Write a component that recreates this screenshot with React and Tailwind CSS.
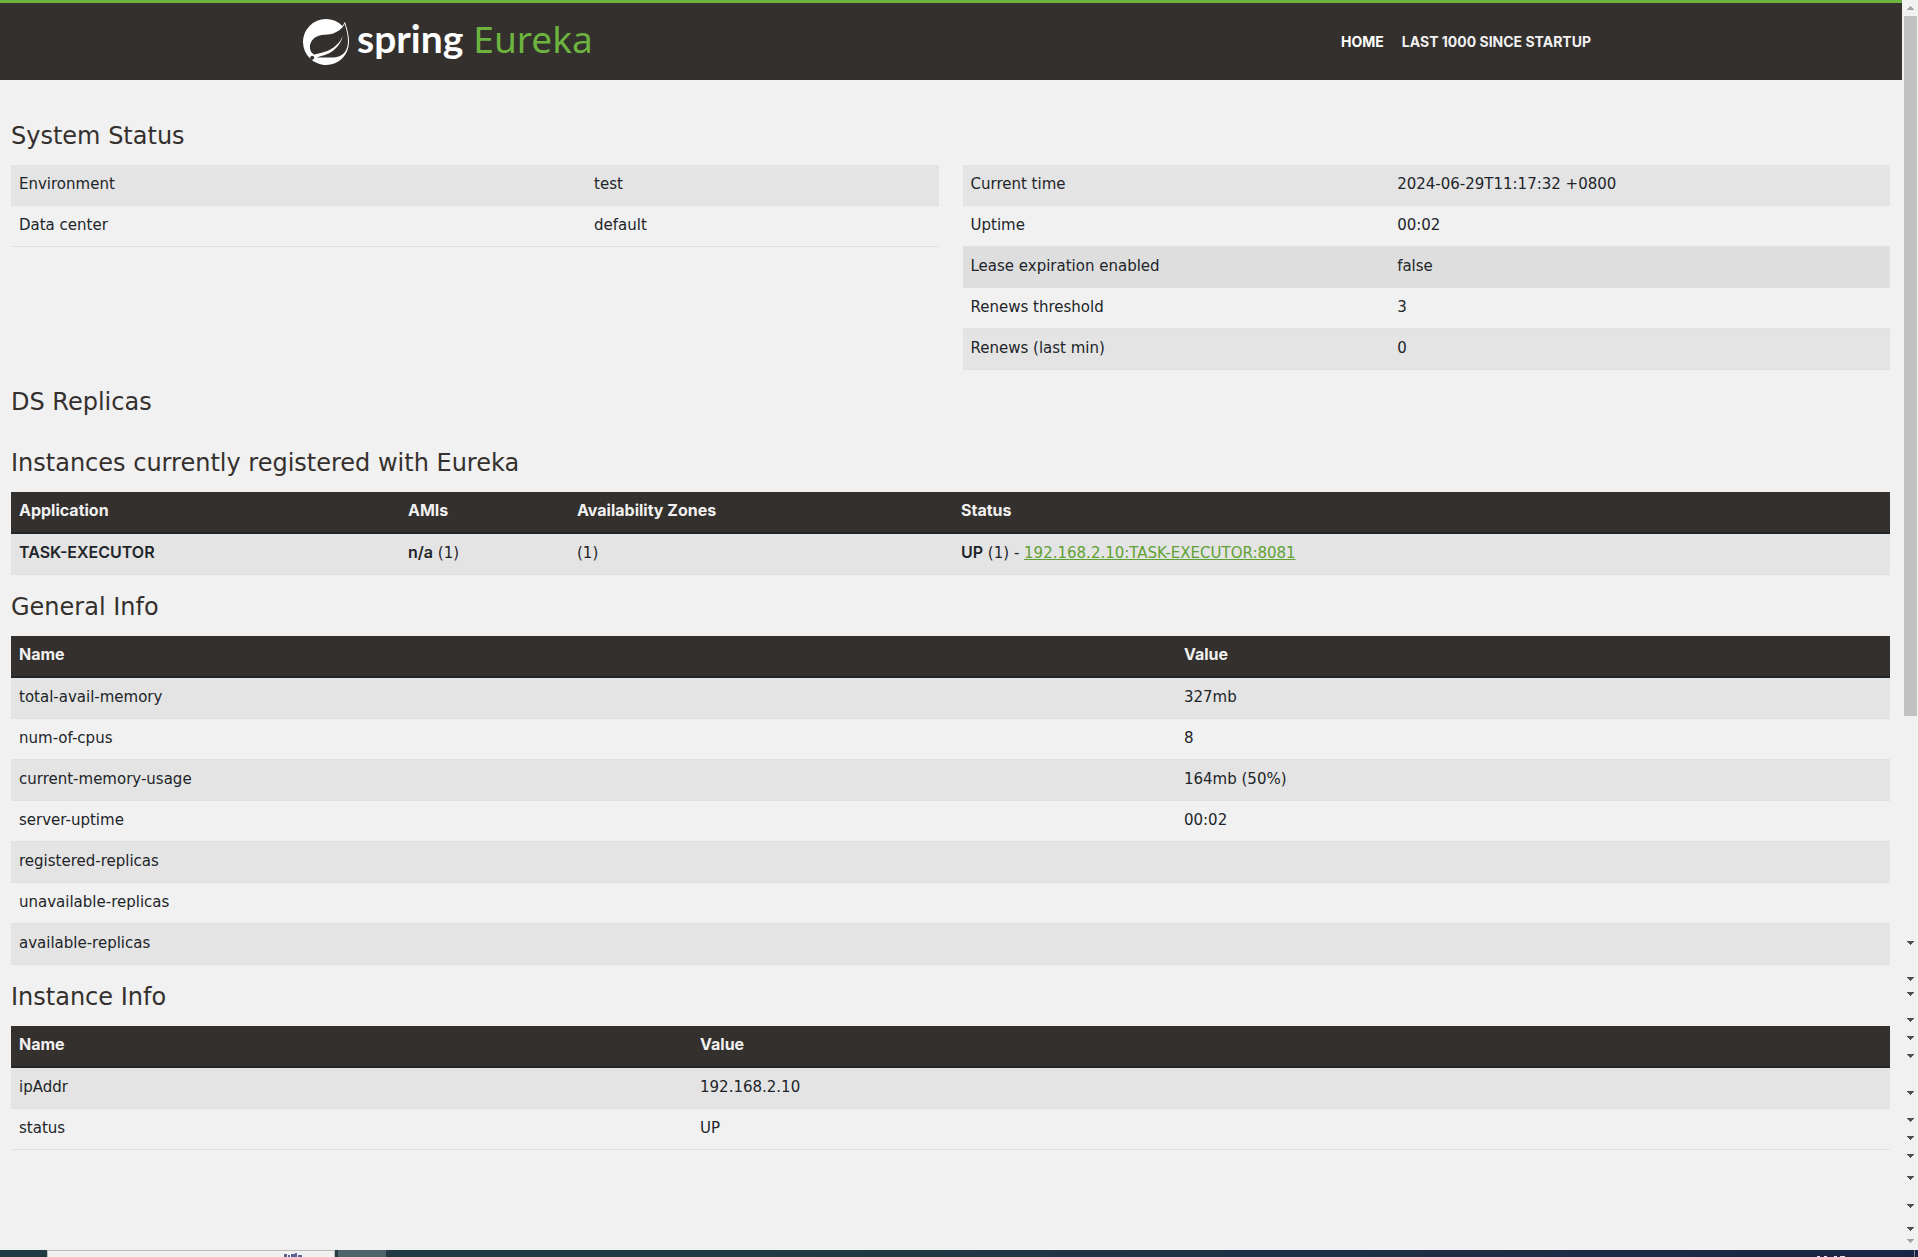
import { SiSpring } from "react-icons/si";

const STATUS_LEFT = [
  ["Environment", "test"],
  ["Data center", "default"],
];

const STATUS_RIGHT = [
  ["Current time", "2024-06-29T11:17:32 +0800"],
  ["Uptime", "00:02"],
  ["Lease expiration enabled", "false"],
  ["Renews threshold", "3"],
  ["Renews (last min)", "0"],
];

const GENERAL = [
  ["total-avail-memory", "327mb"],
  ["num-of-cpus", "8"],
  ["current-memory-usage", "164mb (50%)"],
  ["server-uptime", "00:02"],
  ["registered-replicas", ""],
  ["unavailable-replicas", ""],
  ["available-replicas", ""],
];

const INSTANCE = [
  ["ipAddr", "192.168.2.10"],
  ["status", "UP"],
];

// space above each of the small markers under the scrollbar thumb
const MARK_GAPS = [225, 32, 11, 22, 14, 14, 33, 23, 14, 14, 18, 24, 19];

export default function App() {
  return (
    <div className="flex min-h-screen flex-col bg-[#f1f1f1] font-['DejaVu_Sans',sans-serif] text-[15px] leading-6 text-[#212529]">
      <div className="flex flex-1">
        <div className="min-w-0 flex-1">
          <Header />
          <main className="pt-10 pr-3 pl-[11px]">
            <Title>System Status</Title>
            <div className="grid grid-cols-2 items-start gap-6">
              <InfoTable rows={STATUS_LEFT} first="w-[62%]" />
              <InfoTable rows={STATUS_RIGHT} first="w-[46%]" active={2} />
            </div>

            <Title>DS Replicas</Title>
            <div className="h-4" />

            <Title>Instances currently registered with Eureka</Title>
            <table className="mb-4 w-full table-fixed border-separate border-spacing-0">
              <thead>
                <tr className="bg-[#34302d]">
                  <Th className="w-[389px]">Application</Th>
                  <Th className="w-[169px]">AMIs</Th>
                  <Th className="w-[384px]">Availability Zones</Th>
                  <Th>Status</Th>
                </tr>
              </thead>
              <tbody>
                <tr className="bg-[#e4e4e4]">
                  <Td><Strong>TASK-EXECUTOR</Strong></Td>
                  <Td><Strong>n/a</Strong> (1)</Td>
                  <Td>(1)</Td>
                  <Td>
                    <Strong>UP</Strong> (1) -{" "}
                    <a href="#" className="text-[#5fa134] underline">192.168.2.10:TASK-EXECUTOR:8081</a>
                  </Td>
                </tr>
              </tbody>
            </table>

            <Title>General Info</Title>
            <InfoTable rows={GENERAL} first="w-[62%]" head />

            <Title>Instance Info</Title>
            <InfoTable rows={INSTANCE} first="w-[681px]" head />
          </main>
        </div>
        <Scrollbar />
      </div>
      <Taskbar />
    </div>
  );
}

function Header() {
  return (
    <header className="h-20 border-t-3 border-[#6db33f] bg-[#34302d]">
      <div className="mx-auto flex h-full max-w-[1320px] items-center justify-between px-3">
        <a href="#" className="flex items-center">
          <SiSpring className="size-[46px] text-white" />
          <span className="ml-2 flex h-14 items-baseline gap-2.5 leading-12">
            <span className="font-['Lato',sans-serif] text-[39px] font-bold text-white">spring</span>
            <span className="font-['Noto_Sans',sans-serif] text-[37px] text-[#6db33f]">Eureka</span>
          </span>
        </a>
        <nav className="flex gap-[18px] pr-2 font-['Inter',sans-serif] text-sm font-bold text-[#f1f1f1]">
          <a href="#" className="text-white">HOME</a>
          <a href="#">LAST 1000 SINCE STARTUP</a>
        </nav>
      </div>
    </header>
  );
}

function Title({ children }) {
  return <h1 className="pt-0.5 pb-3.5 text-2xl leading-[29px] text-[#34302d]">{children}</h1>;
}

function Strong({ children }) {
  return <b className="font-['Inter',sans-serif] text-base leading-5 font-semibold">{children}</b>;
}

function Th({ children, className = "" }) {
  return (
    <th
      className={`h-[42px] border-b-2 border-[#212529] px-2 pt-1.5 pb-2.5 text-left align-top font-['Inter',sans-serif] text-base leading-6 font-bold text-[#f1f1f1] ${className}`}
    >
      {children}
    </th>
  );
}

function Td({ children, className = "" }) {
  return (
    <td className={`h-[41px] border-b border-[#dee2e6] px-2 pt-[7px] pb-2 align-top ${className}`}>
      {children}
    </td>
  );
}

function InfoTable({ rows, first, head, active }) {
  return (
    <table className="mb-4 w-full table-fixed border-separate border-spacing-0">
      {head && (
        <thead>
          <tr className="bg-[#34302d]">
            <Th className={first}>Name</Th>
            <Th>Value</Th>
          </tr>
        </thead>
      )}
      <tbody>
        {rows.map(([name, value], i) => (
          <tr key={name} className={i === active ? "bg-[#dedede]" : i % 2 === 0 ? "bg-[#e4e4e4]" : ""}>
            <Td className={first}>{name}</Td>
            <Td>{value}</Td>
          </tr>
        ))}
      </tbody>
    </table>
  );
}

function Scrollbar() {
  return (
    <div className="flex w-4 flex-col items-start bg-[#f1f1f1] pt-1.5" aria-hidden="true">
      <svg viewBox="0 0 7 4" shapeRendering="crispEdges" className="mb-1.5 ml-[5px] h-1 w-[7px] shrink-0 fill-[#a3a3a3]">
        <path d="M3 0h1v1h1v1h1v1h1v1H0V3h1V2h1V1h1z" />
      </svg>
      <div className="ml-0.5 h-[700px] w-[13px] shrink-0 bg-[#c1c1c1]" />
      {MARK_GAPS.map((gap, i) => (
        <Mark key={i} gap={gap} className="fill-[#505050]" />
      ))}
      <Mark gap={8} className="fill-[#a3a3a3]" />
    </div>
  );
}

function Mark({ gap, className }) {
  return (
    <svg
      viewBox="0 0 7 4"
      shapeRendering="crispEdges"
      className={`ml-[5px] h-1 w-[7px] shrink-0 ${className}`}
      style={{ marginTop: gap }}
    >
      <path d="M0 0h7v1H6v1H5v1H4v1H3V3H2V2H1V1H0z" />
    </svg>
  );
}

function Taskbar() {
  return (
    <footer className="flex h-[7px] overflow-hidden bg-linear-to-r from-[#213a44] from-40% to-[#1a2545]">
      <div className="ml-[47px] flex w-72 justify-end border-x border-t border-[#bbbbbb] bg-[#f1f1f1] pr-8">
        <svg viewBox="0 0 18 5" className="mt-0.5 h-[5px] w-[18px] fill-[#5a6494]">
          <path d="M0 1h3v4H0zM4 2h2v3H4zM7 1h4v4H7zM11 0h2v5h-2zM14 2h4v3h-4z" />
        </svg>
      </div>
      <div className="ml-[3px] w-12 bg-[#4f636b]" />
      <svg viewBox="0 0 28 1" className="mt-1.5 mr-[69px] ml-auto h-px w-7 fill-[#dfe3ea]">
        <path d="M0 0h3v1H0zM7 0h3v1H7zM17 0h3v1H17zM23 0h5v1H23z" />
      </svg>
      <div className="mr-[3px] w-px bg-[#7c8496]" />
    </footer>
  );
}
